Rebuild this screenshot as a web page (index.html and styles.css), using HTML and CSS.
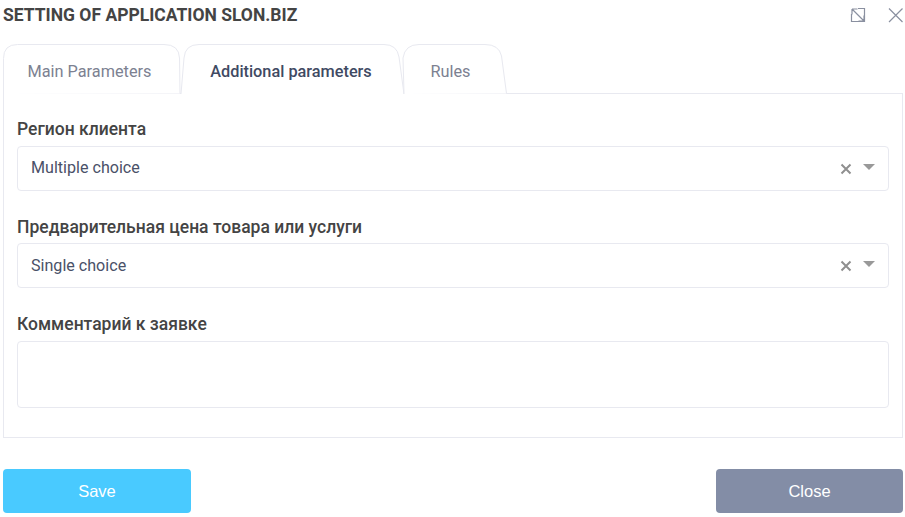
FILE: index.html
```html
<!DOCTYPE html>
<html lang="en">
<head>
  <meta charset="UTF-8">
  <title>Setting of application slon.biz</title>
  <link rel="stylesheet" href="styles.css">
</head>
<body>
  <div class="dialog">
    <div class="dialog-header">
      <h1 class="dialog-title">SETTING OF APPLICATION SLON.BIZ</h1>
      <div class="dialog-tools">
        <svg class="tool-icon" width="16" height="16" viewBox="0 0 16 16" fill="none" stroke="#8a90a0" stroke-width="1.2">
          <path d="M1.500 7V14.500H14.500V1.500H8M2 2L14 14M2 2V7.500M2 2H7.500M14 14V8.500M14 14H8.500"/>
        </svg>
        <svg class="tool-icon" width="16" height="16" viewBox="0 0 16 16" fill="none" stroke="#8a90a0" stroke-width="1.2">
          <path d="M1 1.500L14.500 15M14.500 1.500L1 15"/>
        </svg>
      </div>
    </div>

    <div class="tabs">
      <div class="tab tab-main">
        <svg class="tab-shape" width="178" height="50" viewBox="0 0 178 50"><path d="M.5 50V14.500Q.5 .5 14.500 .5H161Q176 .5 176.500 14L177 49.500"/></svg>
        <span class="tab-label">Main Parameters</span>
      </div>
      <div class="tab tab-extra active">
        <svg class="tab-shape" width="223" height="50" viewBox="0 0 223 50"><path d="M0 50L3 14Q4 .5 18 .5H203Q216 .5 218 13L223 50"/></svg>
        <span class="tab-label">Additional parameters</span>
      </div>
      <div class="tab tab-rules">
        <svg class="tab-shape" width="103" height="50" viewBox="0 0 103 50"><path d="M0 50L-1 14Q1 .5 15 .5H81Q95 .5 97.500 12L102.500 49.500"/></svg>
        <span class="tab-label">Rules</span>
      </div>
    </div>

    <div class="panel">
      <div class="field">
        <label class="field-label">Регион клиента</label>
        <div class="select">
          <span class="select-value">Multiple choice</span>
          <span class="select-clear"><svg width="12" height="12" viewBox="0 0 12 12" fill="none" stroke="#8f8f8f" stroke-width="2"><path d="M1.500 1.500L10.500 10.500M10.500 1.500L1.500 10.500"/></svg></span>
          <span class="select-arrow"></span>
        </div>
      </div>
      <div class="field field-tight">
        <label class="field-label">Предварительная цена товара или услуги</label>
        <div class="select">
          <span class="select-value">Single choice</span>
          <span class="select-clear"><svg width="12" height="12" viewBox="0 0 12 12" fill="none" stroke="#8f8f8f" stroke-width="2"><path d="M1.500 1.500L10.500 10.500M10.500 1.500L1.500 10.500"/></svg></span>
          <span class="select-arrow"></span>
        </div>
      </div>
      <div class="field">
        <label class="field-label">Комментарий к заявке</label>
        <div class="textarea"></div>
      </div>
    </div>

    <div class="dialog-footer">
      <button class="btn btn-save">Save</button>
      <button class="btn btn-close">Close</button>
    </div>
  </div>
</body>
</html>
```

FILE: styles.css
```css
/* Settings dialog */
html, body {
  margin: 0;
  padding: 0;
  background: #fff;
}

.dialog {
  width: 900px;
  margin-left: 3px;
  font-family: Roboto, "Liberation Sans", sans-serif;
  color: #444;
}

.dialog-header {
  height: 44px;
  display: flex;
  justify-content: space-between;
  align-items: flex-start;
}

.dialog-title {
  margin: 5px 0 0;
  font-size: 17.500px;
  line-height: 20px;
  font-weight: 700;
  color: #444;
}

.dialog-tools {
  display: flex;
  gap: 22px;
  margin-top: 7px;
  margin-right: -1px;
}

.tool-icon {
  display: block;
}

/* Tabs */
.tabs {
  display: flex;
  height: 50px;
  position: relative;
  z-index: 1;
}

.tab {
  position: relative;
  height: 50px;
  box-sizing: border-box;
  padding-top: 4px;
  display: flex;
  align-items: center;
  justify-content: center;
  font-size: 16.300px;
  color: #7c8191;
}

.tab-main {
  width: 178px;
  padding-right: 5px;
}

.tab-extra {
  width: 223px;
  padding-right: 3px;
}

.tab-rules {
  width: 103px;
  padding-right: 10px;
}

.tab.active {
  color: #3f4a63;
  font-weight: 500;
}

.tab-shape {
  position: absolute;
  top: 0;
  left: 0;
  overflow: visible;
}

.tab-shape path {
  fill: #fff;
  stroke: #e8e9f0;
  stroke-width: 1;
}

.tab-label {
  position: relative;
}

/* Panel */
.panel {
  box-sizing: border-box;
  height: 345px;
  padding: 24px 13px 0;
  border: 1px solid #e8e9f0;
  margin-top: -1px;
}

.field {
  margin-bottom: 25px;
}

.field-label {
  display: block;
  font-size: 17.500px;
  line-height: 22px;
  font-weight: 500;
  color: #444;
  margin-bottom: 6px;
}

.field-tight .field-label {
  margin-bottom: 5px;
}

.select {
  box-sizing: border-box;
  height: 45px;
  border: 1px solid #e8e9f0;
  border-radius: 4px;
  display: flex;
  align-items: center;
  padding: 0 13px;
  font-size: 16.100px;
  color: #4a5168;
}

.select-value {
  margin-bottom: 3px;
}

.field-tight .select-value {
  margin-bottom: 1px;
}

.select-clear {
  margin-left: auto;
  display: flex;
}

.select-arrow {
  width: 0;
  height: 0;
  margin-left: 11px;
  margin-bottom: 4px;
  border-left: 6.500px solid transparent;
  border-right: 6.500px solid transparent;
  border-top: 6.500px solid #999;
}

.textarea {
  box-sizing: border-box;
  height: 67px;
  border: 1px solid #e8e9f0;
  border-radius: 4px;
}

/* Footer buttons */
.dialog-footer {
  display: flex;
  justify-content: space-between;
  margin-top: 31px;
}

.btn {
  height: 44px;
  padding: 1px 0 0;
  border: none;
  border-radius: 4px;
  color: #fff;
  font-family: "Liberation Sans", Arial, sans-serif;
  font-size: 16.500px;
  cursor: pointer;
}

.btn-save {
  width: 188px;
  background-color: #49caff;
}

.btn-close {
  width: 187px;
  background-color: #838da6;
}
```
